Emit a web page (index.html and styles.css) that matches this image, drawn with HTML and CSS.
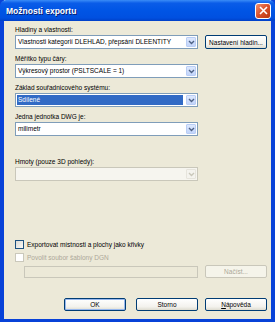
FILE: index.html
```html
<!DOCTYPE html>
<html>
  <head>
    <title>Možnosti exportu</title>
    <link rel="stylesheet" href="styles.css">
  </head>
  <body>
    <div class="window">
      <div class="titlebar">
        <span class="title">Možnosti exportu</span>
        <span class="close">
          <svg width="9" height="9" viewBox="0 0 9 9"><path d="M1 1 L8 8 M8 1 L1 8" stroke="#fff" stroke-width="1.6"/></svg>
        </span>
      </div>
      <div class="content">
        <div class="label">Hladiny a vlastnosti:</div>
        <div class="row">
          <div class="combo">
            <span class="value">Vlastnosti kategorií DLEHLAD, přepsání DLEENTITY</span>
            <span class="arrow"><svg width="7" height="5" viewBox="0 0 7 5"><path d="M1 1 L3.5 3.5 L6 1" fill="none" stroke="#4d6185" stroke-width="1.4"/></svg></span>
          </div>
          <button type="button" class="btn side">Nastavení hladin...</button>
        </div>

        <div class="label">Měřítko typu čáry:</div>
        <div class="combo">
          <span class="value">Výkresový prostor (PSLTSCALE = 1)</span>
          <span class="arrow"><svg width="7" height="5" viewBox="0 0 7 5"><path d="M1 1 L3.5 3.5 L6 1" fill="none" stroke="#4d6185" stroke-width="1.4"/></svg></span>
        </div>

        <div class="label">Základ souřadnicového systému:</div>
        <div class="combo">
          <span class="value selected">Sdílené</span>
          <span class="arrow"><svg width="7" height="5" viewBox="0 0 7 5"><path d="M1 1 L3.5 3.5 L6 1" fill="none" stroke="#4d6185" stroke-width="1.4"/></svg></span>
        </div>

        <div class="label">Jedna jednotka DWG je:</div>
        <div class="combo">
          <span class="value">milimetr</span>
          <span class="arrow"><svg width="7" height="5" viewBox="0 0 7 5"><path d="M1 1 L3.5 3.5 L6 1" fill="none" stroke="#4d6185" stroke-width="1.4"/></svg></span>
        </div>

        <div class="label gap">Hmoty (pouze 3D pohledy):</div>
        <div class="combo disabled">
          <span class="value"></span>
          <span class="arrow"><svg width="7" height="5" viewBox="0 0 7 5"><path d="M1 1 L3.5 3.5 L6 1" fill="none" stroke="#c9c7ba" stroke-width="1.4"/></svg></span>
        </div>

        <label class="check first"><span class="box"></span>Exportovat místnosti a plochy jako křivky</label>
        <label class="check off"><span class="box"></span>Povolit soubor šablony DGN</label>

        <div class="row file">
          <div class="field"></div>
          <button type="button" class="btn side" disabled>Načíst...</button>
        </div>

        <div class="buttons">
          <button type="button" class="btn def">OK</button>
          <button type="button" class="btn">Storno</button>
          <button type="button" class="btn"><u>N</u>ápověda</button>
        </div>
      </div>
    </div>
  </body>
</html>
```

FILE: styles.css
```css
/* základ */
body {
  margin: 0;
  font-family: "Liberation Sans", Arial, sans-serif;
  font-size: 6.5px;
  color: #000;
}

/* okno */
.window {
  width: 275px;
  height: 322px;
  box-sizing: border-box;
  background-color: #ece9d8;
  border: 4px solid #0842d8;
  border-top: none;
  border-bottom-width: 3px;
  display: flex;
  flex-direction: column;
}

.titlebar {
  height: 21px;
  flex-shrink: 0;
  margin: 0 -4px;
  padding: 0 4px 0 6px;
  display: flex;
  align-items: center;
  justify-content: space-between;
  background: linear-gradient(#3a8cf7 0%, #0a5ce8 15%, #0055e5 50%, #0050e0 85%, #0040c8 100%);
  border-radius: 6px 6px 0 0;
}

.title {
  color: #fff;
  font-weight: bold;
  font-size: 8.5px;
  text-shadow: 1px 1px 0 #0a1e70;
}

.close {
  width: 14px;
  height: 14px;
  border: 1px solid #fff;
  border-radius: 3px;
  background: linear-gradient(135deg, #f09070 0%, #d8502a 50%, #b83610 100%);
  display: flex;
  align-items: center;
  justify-content: center;
}

.content {
  padding: 4px 4px 0 11px;
  display: flex;
  flex-direction: column;
}

.label {
  height: 10px;
  line-height: 10px;
  margin-top: 5px;
}

.content > .label:first-child {
  margin-top: 0;
}

.label.gap {
  margin-top: 21px;
}

.row {
  display: flex;
  align-items: center;
  gap: 7px;
}

/* rozbalovací seznam */
.combo {
  width: 183px;
  height: 14px;
  flex-shrink: 0;
  box-sizing: border-box;
  border: 1px solid #7f9db9;
  background-color: #fff;
  display: flex;
  align-items: stretch;
}

.combo .value {
  flex: 1;
  padding-left: 2px;
  line-height: 12px;
  white-space: nowrap;
  overflow: hidden;
}

.combo .value.selected {
  margin: 1px 2px 1px 1px;
  padding-left: 1px;
  line-height: 10px;
  background-color: #316ac5;
  color: #fff;
}

.combo .arrow {
  width: 10px;
  margin: 1px;
  box-sizing: border-box;
  border: 1px solid #b9cdf5;
  border-radius: 1px;
  background: linear-gradient(#dde8fd, #c2d4fa);
  display: flex;
  align-items: center;
  justify-content: center;
}

.combo.disabled {
  border-color: #c9c7ba;
  background-color: #f6f5ef;
}

.combo.disabled .arrow {
  border-color: #e6e4dc;
  background: #f4f3ee;
}

/* tlačítka */
.btn {
  width: 62px;
  height: 14px;
  flex-shrink: 0;
  padding: 0;
  font-family: inherit;
  font-size: 6.5px;
  color: #000;
  border: 1px solid #003c74;
  border-radius: 2px;
  background: linear-gradient(#ffffff, #f3f2ed 70%, #dedcd0);
}

.btn:disabled {
  color: #aca899;
  border-color: #c9c7ba;
  background: #f5f4ea;
}

.btn.def {
  box-shadow: inset 0 0 0 1px #98b8ee;
}

.btn u {
  text-decoration: underline;
}

/* zaškrtávací políčka */
.check {
  height: 9px;
  display: flex;
  align-items: center;
  gap: 3px;
}

.check.first {
  margin-top: 59px;
}

.check.off {
  margin-top: 4px;
  color: #aca899;
}

.check .box {
  width: 7px;
  height: 7px;
  border: 1px solid #1c5180;
  background: linear-gradient(135deg, #dcdbd5, #f8f8f6);
}

.check.off .box {
  border-color: #cac8bb;
  background: #fff;
}

.file {
  margin-top: 3px;
  margin-left: 9px;
}

.field {
  width: 174px;
  height: 12px;
  box-sizing: border-box;
  border: 1px solid #c9c7ba;
  background-color: #ece9d8;
}

.file .btn {
  height: 13px;
}

.buttons {
  margin-top: 20px;
  display: flex;
  justify-content: flex-end;
}

.buttons .btn {
  width: 62px;
  height: 13px;
}

.buttons .btn.def {
  margin-right: 10px;
}

.buttons .btn:nth-child(2) {
  margin-right: 7px;
}
```
